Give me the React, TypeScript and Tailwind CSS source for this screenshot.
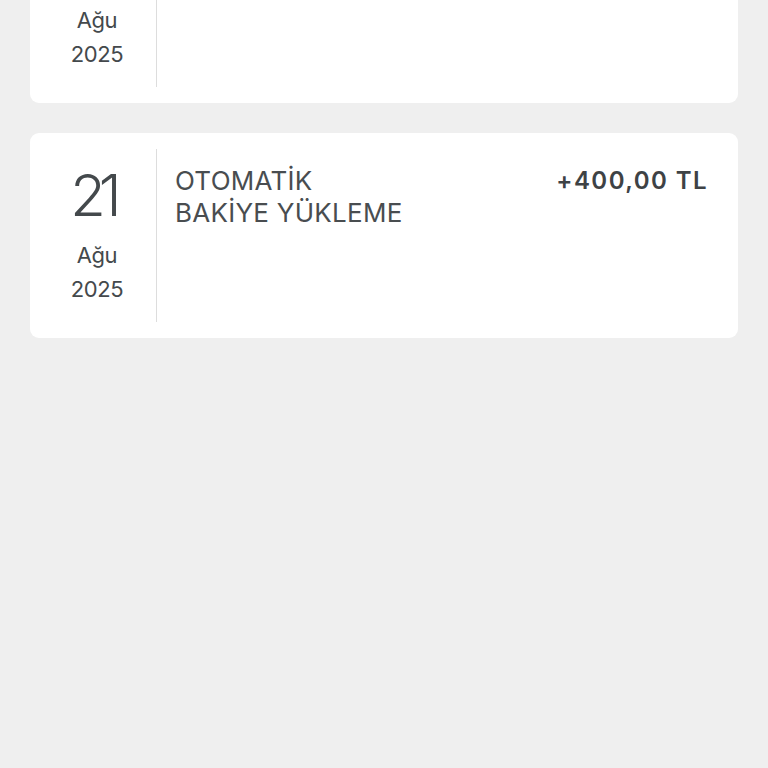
const transactions = [
  { day: "22", month: "Ağu", year: "2025", title: ["OTOMATİK", "BAKİYE YÜKLEME"], amount: "+400,00 TL" },
  { day: "21", month: "Ağu", year: "2025", title: ["OTOMATİK", "BAKİYE YÜKLEME"], amount: "+400,00 TL" },
];

function TransactionCard({ tx }: { tx: (typeof transactions)[number] }) {
  return (
    <div className="flex rounded-[9px] bg-white py-4 pr-[30px]">
      <div className="flex w-[127px] shrink-0 flex-col items-center border-r border-[#dddddd] pb-4 pl-2 text-[#44494c]">
        <span className="-ml-[9px] mt-[17px] text-[58px] font-light leading-[58px] tracking-[-0.12em]">{tx.day}</span>
        <span className="mt-[14px] text-[22px] leading-[34px] tracking-[-0.02em]">{tx.month}</span>
        <span className="text-[22px] leading-[34px] tracking-[-0.02em]">{tx.year}</span>
      </div>
      <div className="flex flex-1 items-start justify-between pl-[18px] pt-4">
        <div className="text-[26px] leading-[32px] tracking-[0.01em] text-[#494d50]">
          {tx.title.map((line) => (
            <div key={line}>{line}</div>
          ))}
        </div>
        <div className="text-[24px] font-semibold leading-[32px] tracking-[0.06em] text-[#3e4245]">
          {tx.amount}
        </div>
      </div>
    </div>
  );
}

export default function App() {
  return (
    <div className="h-[768px] overflow-hidden bg-[#efefef] px-[30px] font-['Inter','Noto_Sans',sans-serif]">
      <div className="-mt-[102px] flex flex-col gap-[30px]">
        {transactions.map((tx) => (
          <TransactionCard key={tx.day} tx={tx} />
        ))}
      </div>
    </div>
  );
}
